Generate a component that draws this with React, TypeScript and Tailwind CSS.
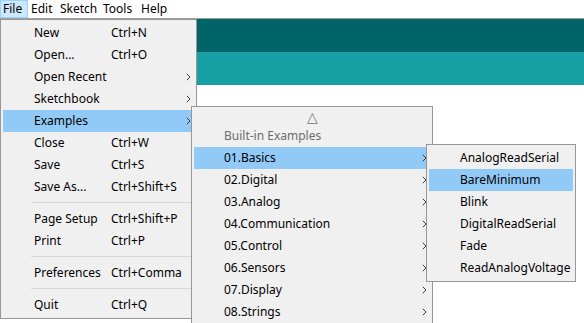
import React from "react";

const Arrow = () => (
  <svg width="5" height="8" viewBox="0 0 5 8" className="block">
    <path d="M0.8 0.8 L4 4 L0.8 7.2" fill="none" stroke="#3c3c3c" strokeWidth="1" />
  </svg>
);

type Item =
  | { type: "sep" }
  | { type: "item"; label: string; shortcut?: string; sub?: boolean; active?: boolean };

const fileItems: Item[] = [
  { type: "item", label: "New", shortcut: "Ctrl+N" },
  { type: "item", label: "Open...", shortcut: "Ctrl+O" },
  { type: "item", label: "Open Recent", sub: true },
  { type: "item", label: "Sketchbook", sub: true },
  { type: "item", label: "Examples", sub: true, active: true },
  { type: "item", label: "Close", shortcut: "Ctrl+W" },
  { type: "item", label: "Save", shortcut: "Ctrl+S" },
  { type: "item", label: "Save As...", shortcut: "Ctrl+Shift+S" },
  { type: "sep" },
  { type: "item", label: "Page Setup", shortcut: "Ctrl+Shift+P" },
  { type: "item", label: "Print", shortcut: "Ctrl+P" },
  { type: "sep" },
  { type: "item", label: "Preferences", shortcut: "Ctrl+Comma" },
  { type: "sep" },
  { type: "item", label: "Quit", shortcut: "Ctrl+Q" },
];

const exampleItems = [
  "01.Basics",
  "02.Digital",
  "03.Analog",
  "04.Communication",
  "05.Control",
  "06.Sensors",
  "07.Display",
  "08.Strings",
];

const basics = [
  "AnalogReadSerial",
  "BareMinimum",
  "Blink",
  "DigitalReadSerial",
  "Fade",
  "ReadAnalogVoltage",
];

export default function App() {
  return (
    <div
      className="relative w-[584px] h-[323px] overflow-hidden bg-white text-[12px] text-black"
      style={{ fontFamily: '"Noto Sans", "Open Sans", sans-serif' }}
    >
      {/* menu bar */}
      <div className="flex h-[18px] items-center bg-white">
        <div className="h-[18px] w-[28px] border border-[#99d1ff] bg-[#cce8ff] pl-[2px] leading-[16px]">File</div>
        <div className="w-[29px] pl-[3px] leading-[18px]">Edit</div>
        <div className="w-[43px] pl-[3px] leading-[18px]">Sketch</div>
        <div className="w-[38px] pl-[3px] leading-[18px]">Tools</div>
        <div className="pl-[3px] leading-[18px]">Help</div>
      </div>
      <div className="h-px bg-[#a0a0a0]" />
      <div className="h-[33px] bg-[#006468]" />
      <div className="h-[33px] bg-[#17a1a5]" />

      {/* File menu */}
      <div className="absolute left-0 top-[19px] w-[197px] border border-[#979797] bg-[#f0f0f0] p-[2px]">
        {fileItems.map((it, i) =>
          it.type === "sep" ? (
            <div key={i} className="h-[10px] pl-[28px] pt-[4px]">
              <div className="h-px bg-[#d7d7d7]" />
            </div>
          ) : (
            <div
              key={i}
              className={`relative flex h-[22px] items-center pl-[31px] ${it.active ? "bg-[#91c9f7]" : ""}`}
            >
              <span className="w-[77px] shrink-0 whitespace-nowrap">{it.label}</span>
              {it.shortcut && <span className="whitespace-nowrap">{it.shortcut}</span>}
              {it.sub && (
                <span className="absolute right-[3px] top-[7px]">
                  <Arrow />
                </span>
              )}
            </div>
          )
        )}
      </div>

      {/* Examples submenu */}
      <div className="absolute left-[191px] top-[106px] w-[242px] h-[240px] border border-[#979797] bg-[#f0f0f0] p-[2px]">
        <div className="flex h-[16px] items-center justify-center text-[14px] leading-none text-[#707070]">△</div>
        <div className="flex h-[22px] items-center pl-[30px] text-[#6d6d6d]">Built-in Examples</div>
        {exampleItems.map((label, i) => (
          <div
            key={label}
            className={`relative flex h-[22px] items-center pl-[30px] ${i === 0 ? "bg-[#91c9f7]" : ""}`}
          >
            <span className="whitespace-nowrap">{label}</span>
            <span className="absolute right-[3px] top-[7px]">
              <Arrow />
            </span>
          </div>
        ))}
      </div>

      {/* Basics submenu */}
      <div className="absolute left-[426px] top-[144px] w-[150px] border border-[#979797] bg-[#f0f0f0] p-[2px]">
        {basics.map((label, i) => (
          <div
            key={label}
            className={`flex h-[22px] items-center pl-[31px] ${i === 1 ? "bg-[#91c9f7]" : ""}`}
          >
            <span className="whitespace-nowrap">{label}</span>
          </div>
        ))}
      </div>
    </div>
  );
}
